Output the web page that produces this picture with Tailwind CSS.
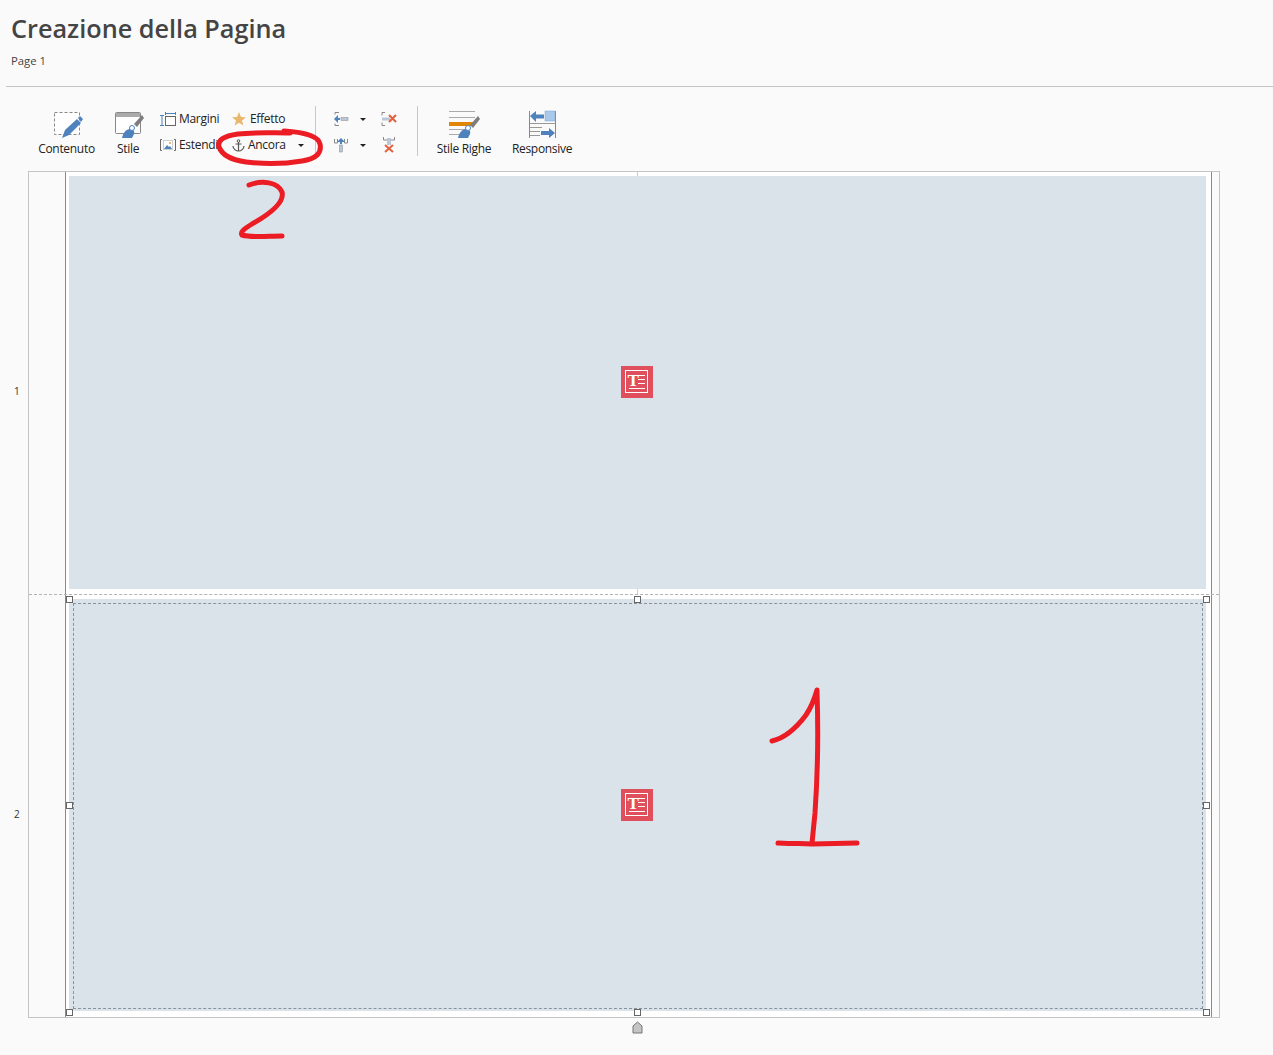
<!DOCTYPE html>
<html lang="it">
<head>
  <meta charset="UTF-8" />
  <meta name="viewport" content="width=device-width, initial-scale=1.0"/>
  <title>Creazione della Pagina</title>
  <script src="https://cdn.jsdelivr.net/npm/@tailwindcss/browser@4"></script>
</head>
<body class="antialiased bg-[#fafafa] font-['Open_Sans',sans-serif] text-[#222]">
  <div class="relative w-[1273px] h-[1055px] overflow-hidden">

    <!-- Titolo -->
    <header class="ml-[6px] h-[87px] border-b border-[#c4c4c4] pl-[5px] pt-[11px]">
      <h1 class="text-[25.25px] leading-[34px] font-semibold text-[#444]">Creazione della Pagina</h1>
      <p class="mt-[8px] text-[11.3px] leading-[16px] text-[#444]">Page 1</p>
    </header>

    <!-- Barra strumenti -->
    <div class="h-[84px] flex pl-[38px] text-[12px] leading-[16px] tracking-[-0.3px]">
      <button class="w-[57px] mt-[22px] flex flex-col items-center">
        <svg width="32" height="30" viewBox="0 0 32 30">
          <rect x="3.500" y="3.500" width="25" height="22" fill="#fff" stroke="#888" stroke-dasharray="3 2"/>
          <path d="M11 29l3-8 12-11 4 4-12 12z" fill="#4d82bd"/>
          <path d="M27 9l2-2 3 3-2 3z" fill="#4d82bd"/>
        </svg>
        <span class="mt-[2px] whitespace-nowrap">Contenuto</span>
      </button>
      <button class="w-[30px] ml-[18px] mt-[22px] flex flex-col items-center">
        <svg width="32" height="30" viewBox="0 0 32 30">
          <rect x="3.500" y="3.500" width="25" height="21" rx="1" fill="#fff" stroke="#888"/>
          <rect x="4" y="4" width="24" height="4" fill="#aaa"/>
          <path d="M22 15l8-9 2 3-7 9z" fill="#7d7d7d"/>
          <path d="M10 29c1-5 4-9 8-9 3 0 5 2 4 5l-2 4z" fill="#4d82bd"/>
          <circle cx="20" cy="19" r="2.500" fill="#fff" stroke="#4d82bd"/>
        </svg>
        <span class="mt-[2px]">Stile</span>
      </button>

      <div class="ml-[17px] mt-[19px] grid grid-cols-[72px_83px] grid-rows-[26px_26px]">
        <div class="flex items-center gap-[3px]">
          <svg width="16" height="14" viewBox="0 0 16 14"><path d="M5 1.500h11M5.500 0v3M15.500 0v3M0 3.500h4M2 3.500v10M0 13.500h4" fill="none" stroke="#4d82bd"/><rect x="5.500" y="4.500" width="10" height="9" fill="#fff" stroke="#666"/></svg>
          <span>Margini</span>
        </div>
        <div class="flex items-center gap-[4px]">
          <svg width="14" height="14" viewBox="0 0 14 14"><path d="M7 0l2 5 5 .3-4 3.200 1.400 5L7 10.800 2.600 13.500 4 8.500 0 5.300 5 5z" fill="#e8b86d"/></svg>
          <span>Effetto</span>
        </div>
        <div class="flex items-center gap-[3px]">
          <svg width="16" height="12" viewBox="0 0 16 12"><path d="M2 .5H.5v11H2M14 .5h1.500v11H14" fill="none" stroke="#666"/><rect x="3.500" y="1.500" width="9" height="9" fill="#fff" stroke="#ccc"/><path d="M4 10l3-4 2 2 1-1 2 3z" fill="#4d82bd"/><rect x="9" y="3" width="2" height="2" fill="#e8b86d"/></svg>
          <span>Estendi</span>
        </div>
        <div class="flex items-center">
          <svg width="13" height="13" viewBox="0 0 13 13"><circle cx="6.500" cy="2" r="1.300" fill="none" stroke="#555"/><path d="M6.500 3v9M3.500 5h6M1 7c0 3 3 5 5.500 5S12 10 12 7" fill="none" stroke="#555" stroke-width="1.200"/></svg>
          <span class="ml-[3px]">Ancora</span>
          <span class="ml-[12px] w-0 h-0 border-x-[3px] border-x-transparent border-t-[3px] border-t-[#222]"></span>
        </div>
      </div>

      <div class="mt-[19px] w-px h-[50px] bg-[#c8c8c8]"></div>

      <div class="ml-[17px] mt-[19px] grid grid-cols-[48px_16px] grid-rows-[26px_26px]">
        <div class="flex items-center">
          <svg width="16" height="16" viewBox="0 0 16 16"><path d="M6 1.500H2v2M6 14.500H2v-2" fill="none" stroke="#888"/><path d="M1 8l4-4v3h2v2H5v3z" fill="#4d82bd"/><rect x="8" y="6.500" width="7" height="3" fill="#b9c7d8" stroke="#888" stroke-width=".5"/></svg>
          <span class="ml-[11px] w-0 h-0 border-x-[3px] border-x-transparent border-t-[3px] border-t-[#222]"></span>
        </div>
        <div class="flex items-center">
          <svg width="16" height="16" viewBox="0 0 16 16"><path d="M4 1.500h-3v3M4 14.500h-3v-3" fill="none" stroke="#888"/><rect x="1" y="6.500" width="8" height="3" fill="#b9c7d8"/><path d="M8 4l7 7M15 4l-7 7" stroke="#e2603e" stroke-width="2"/></svg>
        </div>
        <div class="flex items-center">
          <svg width="16" height="16" viewBox="0 0 16 16"><path d="M1.500 2v4h3V2M11.500 2v4h3V2" fill="none" stroke="#888"/><path d="M8 1l4 4H9v2H7V5H4z" fill="#4d82bd"/><rect x="6.500" y="8" width="3" height="7" fill="#b9c7d8" stroke="#888" stroke-width=".5"/></svg>
          <span class="ml-[11px] w-0 h-0 border-x-[3px] border-x-transparent border-t-[3px] border-t-[#222]"></span>
        </div>
        <div class="flex items-center">
          <svg width="16" height="16" viewBox="0 0 16 16"><path d="M2.500 0v3h11V0" fill="none" stroke="#888"/><rect x="6" y="1" width="4" height="7" fill="#b9c7d8"/><path d="M4 8l8 7M12 8l-8 7" stroke="#e2603e" stroke-width="2"/></svg>
        </div>
      </div>

      <div class="ml-[20px] mt-[19px] w-px h-[50px] bg-[#c8c8c8]"></div>

      <button class="w-[56px] ml-[18px] mt-[22px] flex flex-col items-center">
        <svg width="32" height="30" viewBox="0 0 32 30">
          <path d="M1 2.500h26M1 8.500h26M1 20.500h18M1 25.500h11" stroke="#aaa"/>
          <rect x="1" y="13" width="24" height="4" fill="#e08600"/>
          <path d="M22 16l8-9 2 3-7 9z" fill="#7d7d7d"/>
          <path d="M10 29c1-5 4-9 8-9 3 0 5 2 4 5l-2 4z" fill="#4d82bd"/>
          <circle cx="20" cy="19" r="2.500" fill="#fff" stroke="#4d82bd"/>
        </svg>
        <span class="mt-[2px] whitespace-nowrap">Stile Righe</span>
      </button>
      <button class="w-[60px] ml-[20px] mt-[22px] flex flex-col items-center">
        <svg width="32" height="30" viewBox="0 0 32 30">
          <path d="M3.500 2v27M29.500 2v27" stroke="#888"/>
          <rect x="19" y="2" width="10" height="10" fill="#a9c8ea" stroke="#7fa6d0" stroke-width=".5"/>
          <path d="M4 7l6-5v3.500h8v4h-8V13z" fill="#4d82bd"/>
          <path d="M4 14.500h25M4 18.500h12M4 22.500h10M4 26.500h10" stroke="#999"/>
          <path d="M29 24l-6-5v3h-8v4h8v3z" fill="#4d82bd"/>
        </svg>
        <span class="mt-[2px] whitespace-nowrap">Responsive</span>
      </button>
    </div>

    <!-- Griglia pagina -->
    <div class="relative ml-[28px] w-[1192px] border border-[#c4c4c4]">
      <div class="h-[423px] grid grid-cols-[36px_1147px_7px] border-b border-dashed border-[#b4b4b4]">
        <div class="flex items-center -ml-[15px] pt-[16px] text-[10px] text-[#333]">1</div>
        <div class="relative bg-white border-x border-[#8a8a8a] pl-[3px] pr-[5px] pt-[4px] pb-[5px]">
          <div class="h-full bg-[#dbe3ea] flex items-center justify-center pb-[1px] pr-[1px]">
            <svg width="32" height="32" viewBox="0 0 32 32">
              <rect width="32" height="32" fill="#e0505c"/>
              <rect x="4.500" y="4.500" width="22" height="22" fill="none" stroke="#fff"/>
              <text x="6.500" y="19.500" font-family="'Liberation Serif', serif" font-weight="700" font-size="17" fill="#fff">T</text>
              <path d="M17 9.500h7M17 13.500h7M17 17.500h7M8 22.500h16" stroke="#fff"/>
            </svg>
          </div>
          <div class="absolute left-[571px] top-0 w-px h-[4px] bg-[#ccc]"></div>
          <div class="absolute left-[571px] bottom-0 w-px h-[5px] bg-[#ccc]"></div>
        </div>
        <div></div>
      </div>
      <div class="h-[422px] grid grid-cols-[36px_1147px_7px]">
        <div class="flex items-center -ml-[15px] pt-[16px] text-[10px] text-[#333]">2</div>
        <div class="bg-white border-x border-[#8a8a8a] pl-[3px] pr-[5px] pt-[4px] pb-[6px]">
          <div class="h-full bg-[#dbe3ea] pt-[4px] pr-[3px] pb-[2px] pl-[4px]">
            <div class="h-full border border-dashed border-[#8a9299] flex items-center justify-center pr-[2px] pb-[2px]">
              <svg width="32" height="32" viewBox="0 0 32 32">
                <rect width="32" height="32" fill="#e0505c"/>
                <rect x="4.500" y="4.500" width="22" height="22" fill="none" stroke="#fff"/>
                <text x="6.500" y="19.500" font-family="'Liberation Serif', serif" font-weight="700" font-size="17" fill="#fff">T</text>
                <path d="M17 9.500h7M17 13.500h7M17 17.500h7M8 22.500h16" stroke="#fff"/>
              </svg>
            </div>
          </div>
        </div>
        <div></div>
      </div>
    </div>

    <!-- Maniglie di selezione -->
    <span class="absolute left-[66px] top-[596px] size-[7px] bg-white border border-[#666]"></span>
    <span class="absolute left-[634px] top-[596px] size-[7px] bg-white border border-[#666]"></span>
    <span class="absolute left-[1203px] top-[596px] size-[7px] bg-white border border-[#666]"></span>
    <span class="absolute left-[66px] top-[802px] size-[7px] bg-white border border-[#666]"></span>
    <span class="absolute left-[1203px] top-[802px] size-[7px] bg-white border border-[#666]"></span>
    <span class="absolute left-[66px] top-[1009px] size-[7px] bg-white border border-[#666]"></span>
    <span class="absolute left-[634px] top-[1009px] size-[7px] bg-white border border-[#666]"></span>
    <span class="absolute left-[1203px] top-[1009px] size-[7px] bg-white border border-[#666]"></span>

    <svg class="absolute left-[632px] top-[1021px]" width="11" height="13" viewBox="0 0 11 13">
      <path d="M5.500 1l4.500 4v7H1V5z" fill="#c4c4c4" stroke="#777"/>
    </svg>

    <!-- Annotazioni a mano -->
    <svg class="absolute inset-0 pointer-events-none" width="1273" height="1055" viewBox="0 0 1273 1055" fill="none" stroke="#ec1c24" stroke-width="5" stroke-linecap="round" stroke-linejoin="round">
      <path d="M284 131C302 132 318 135 320 144C322 153 316 159 302 161C285 164 262 164 246 162C232 160 222 155 219 147C217 140 224 136 238 134C255 132 270 133 290 133"/>
      <path d="M249 185C262 180 278 182 282 192C285 203 268 215 252 224C244 229 240 232 242 235C252 238 268 236 282 236"/>
      <path d="M772 741C785 738 797 727 806 715C812 706 815 697 817 690C818 720 818 770 815 813L812 843"/>
      <path d="M778 843C800 844 800 843 812 844L857 843"/>
    </svg>
  </div>
</body>
</html>
